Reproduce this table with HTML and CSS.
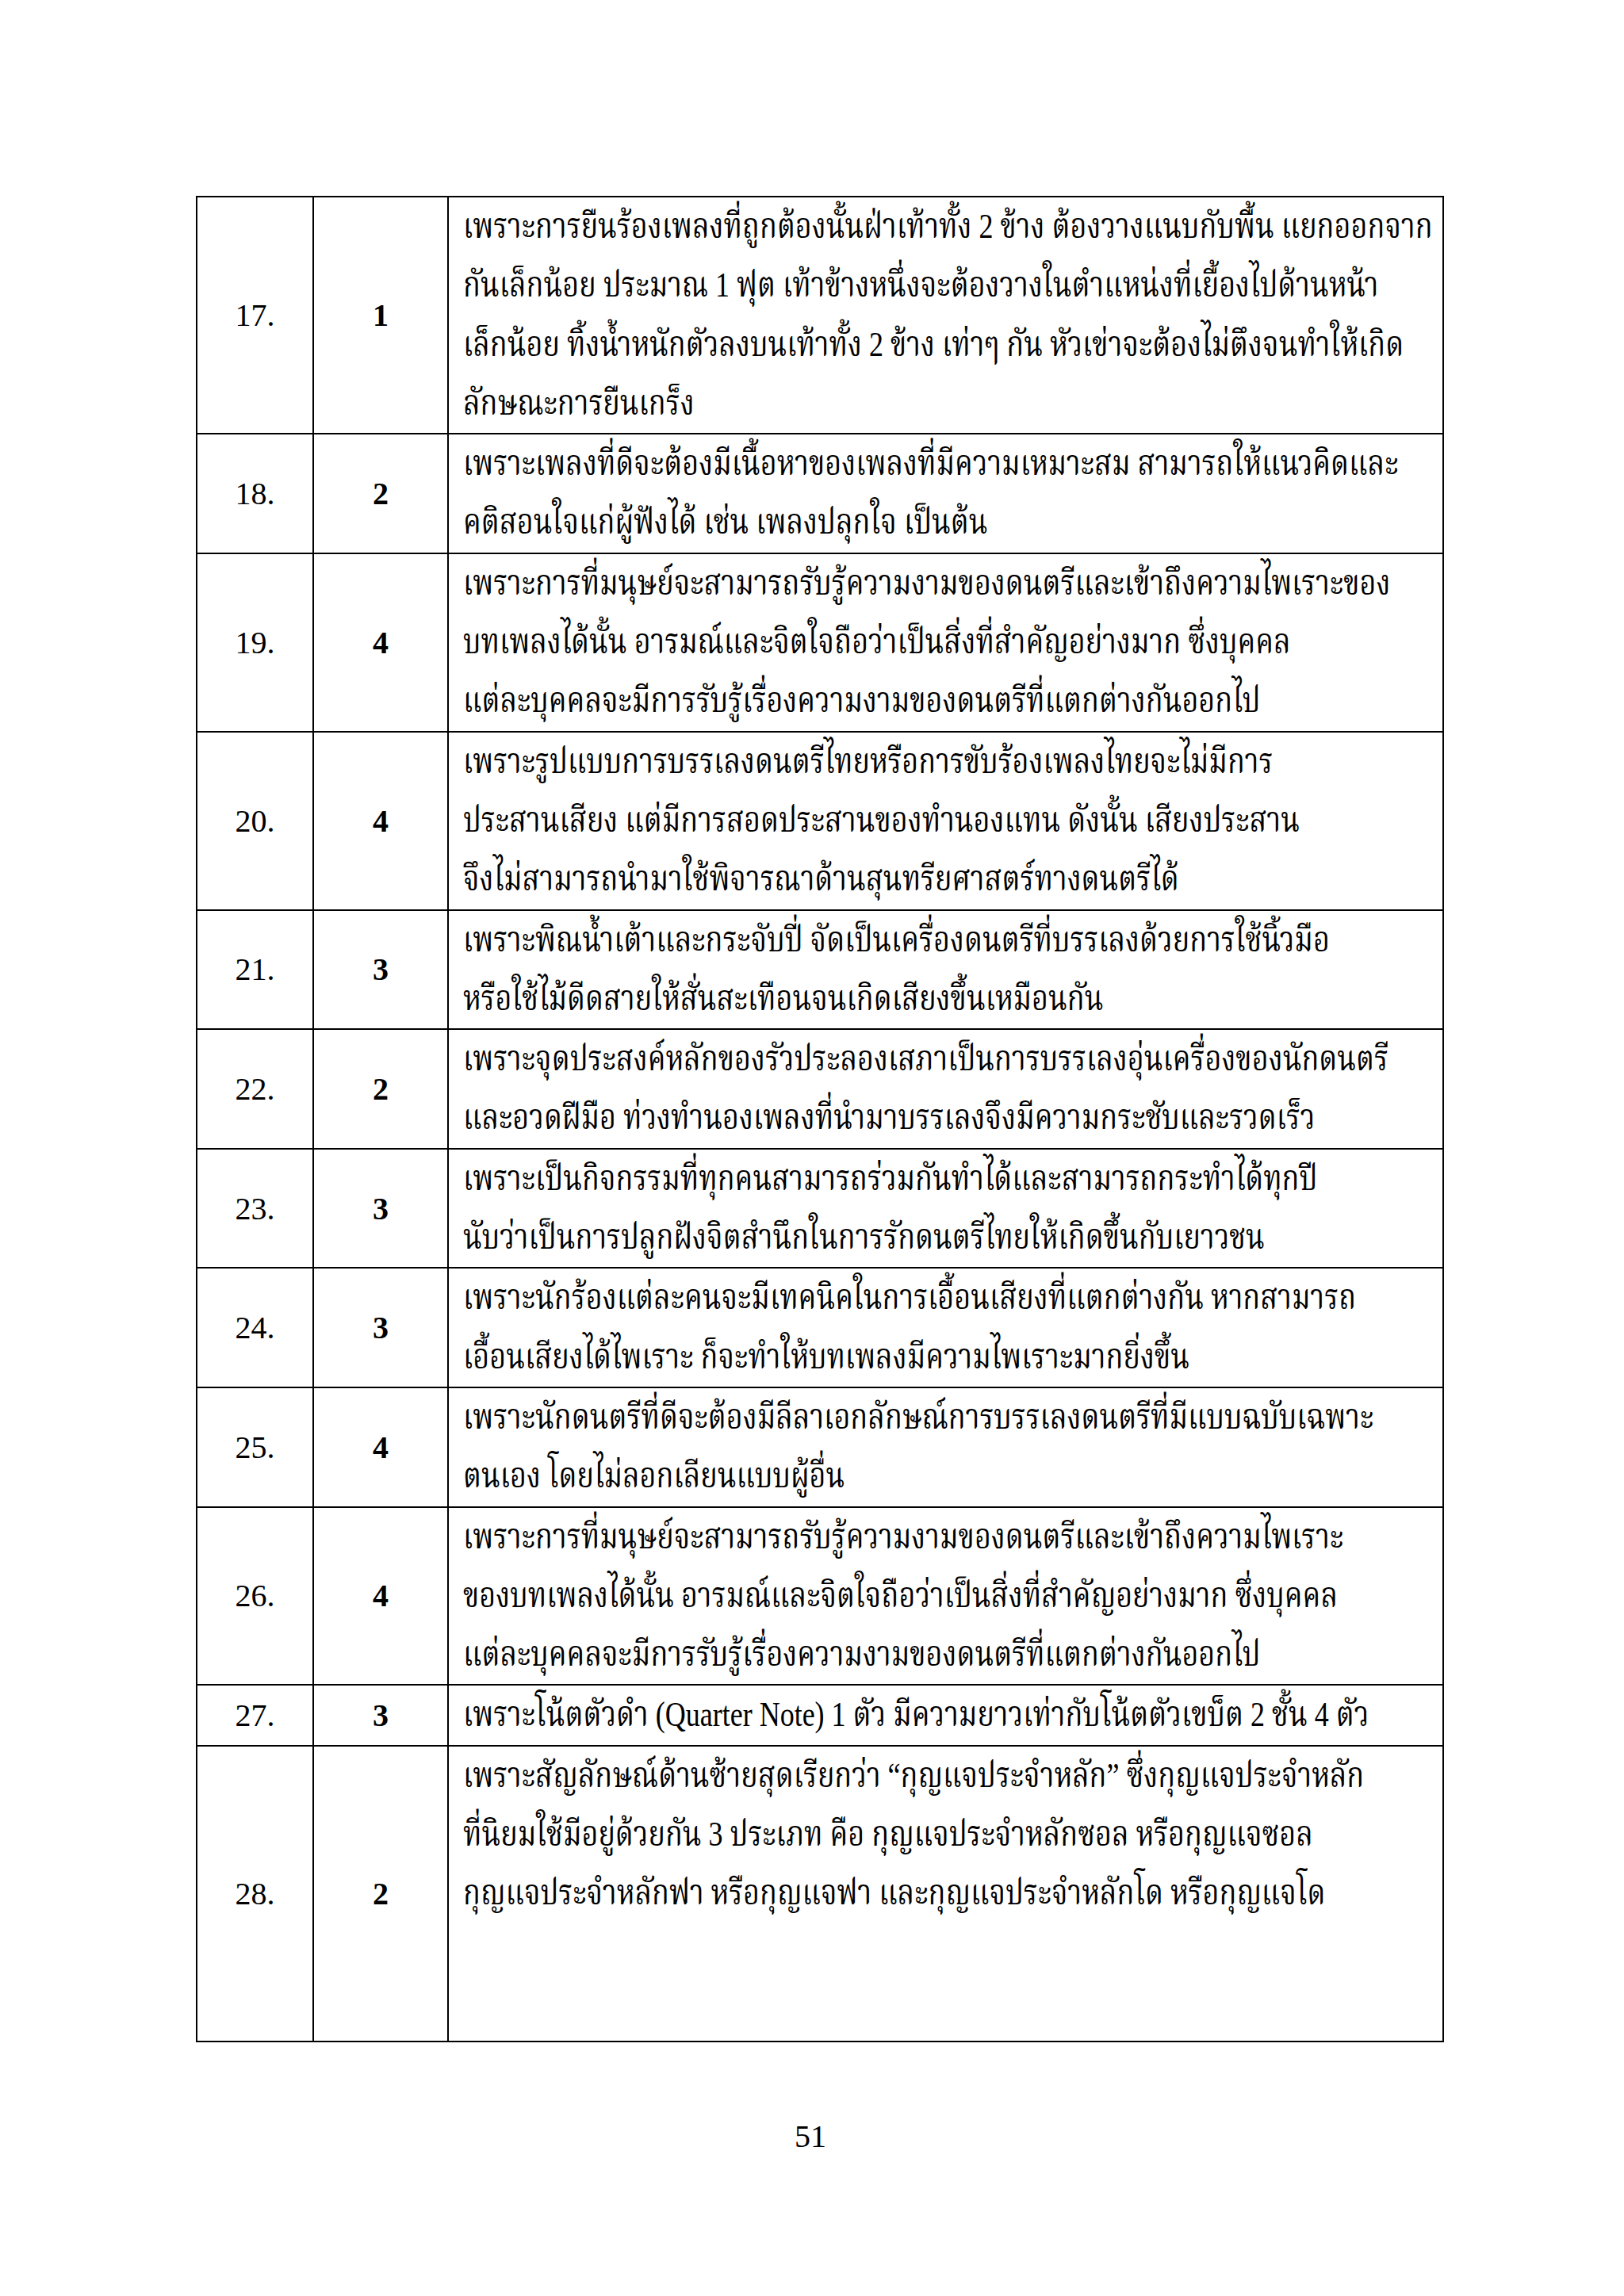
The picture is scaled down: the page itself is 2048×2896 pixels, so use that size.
FILE: index.html
```html
<!DOCTYPE html>
<html lang="th">
<head>
<meta charset="utf-8">
<title>51</title>
<link rel="stylesheet" href="styles.css">
</head>
<body>
<div class="page">
<table class="answers">
<colgroup><col class="c-no"><col class="c-ans"><col class="c-why"></colgroup>
<tbody>
<tr><td class="no">17.</td><td class="ans">1</td><td class="why">
<span class="ln">เพราะการยืนร้องเพลงที่ถูกต้องนั้นฝ่าเท้าทั้ง 2 ข้าง ต้องวางแนบกับพื้น แยกออกจาก</span>
<span class="ln">กันเล็กน้อย ประมาณ 1 ฟุต เท้าข้างหนึ่งจะต้องวางในตำแหน่งที่เยื้องไปด้านหน้า</span>
<span class="ln">เล็กน้อย ทิ้งน้ำหนักตัวลงบนเท้าทั้ง 2 ข้าง เท่าๆ กัน หัวเข่าจะต้องไม่ตึงจนทำให้เกิด</span>
<span class="ln">ลักษณะการยืนเกร็ง</span>
</td></tr>
<tr><td class="no">18.</td><td class="ans">2</td><td class="why">
<span class="ln">เพราะเพลงที่ดีจะต้องมีเนื้อหาของเพลงที่มีความเหมาะสม สามารถให้แนวคิดและ</span>
<span class="ln">คติสอนใจแก่ผู้ฟังได้ เช่น เพลงปลุกใจ เป็นต้น</span>
</td></tr>
<tr><td class="no">19.</td><td class="ans">4</td><td class="why">
<span class="ln">เพราะการที่มนุษย์จะสามารถรับรู้ความงามของดนตรีและเข้าถึงความไพเราะของ</span>
<span class="ln">บทเพลงได้นั้น อารมณ์และจิตใจถือว่าเป็นสิ่งที่สำคัญอย่างมาก ซึ่งบุคคล</span>
<span class="ln">แต่ละบุคคลจะมีการรับรู้เรื่องความงามของดนตรีที่แตกต่างกันออกไป</span>
</td></tr>
<tr><td class="no">20.</td><td class="ans">4</td><td class="why">
<span class="ln">เพราะรูปแบบการบรรเลงดนตรีไทยหรือการขับร้องเพลงไทยจะไม่มีการ</span>
<span class="ln">ประสานเสียง แต่มีการสอดประสานของทำนองแทน ดังนั้น เสียงประสาน</span>
<span class="ln">จึงไม่สามารถนำมาใช้พิจารณาด้านสุนทรียศาสตร์ทางดนตรีได้</span>
</td></tr>
<tr><td class="no">21.</td><td class="ans">3</td><td class="why">
<span class="ln">เพราะพิณน้ำเต้าและกระจับปี่ จัดเป็นเครื่องดนตรีที่บรรเลงด้วยการใช้นิ้วมือ</span>
<span class="ln">หรือใช้ไม้ดีดสายให้สั่นสะเทือนจนเกิดเสียงขึ้นเหมือนกัน</span>
</td></tr>
<tr><td class="no">22.</td><td class="ans">2</td><td class="why">
<span class="ln">เพราะจุดประสงค์หลักของรัวประลองเสภาเป็นการบรรเลงอุ่นเครื่องของนักดนตรี</span>
<span class="ln">และอวดฝีมือ ท่วงทำนองเพลงที่นำมาบรรเลงจึงมีความกระชับและรวดเร็ว</span>
</td></tr>
<tr><td class="no">23.</td><td class="ans">3</td><td class="why">
<span class="ln">เพราะเป็นกิจกรรมที่ทุกคนสามารถร่วมกันทำได้และสามารถกระทำได้ทุกปี</span>
<span class="ln">นับว่าเป็นการปลูกฝังจิตสำนึกในการรักดนตรีไทยให้เกิดขึ้นกับเยาวชน</span>
</td></tr>
<tr><td class="no">24.</td><td class="ans">3</td><td class="why">
<span class="ln">เพราะนักร้องแต่ละคนจะมีเทคนิคในการเอื้อนเสียงที่แตกต่างกัน หากสามารถ</span>
<span class="ln">เอื้อนเสียงได้ไพเราะ ก็จะทำให้บทเพลงมีความไพเราะมากยิ่งขึ้น</span>
</td></tr>
<tr><td class="no">25.</td><td class="ans">4</td><td class="why">
<span class="ln">เพราะนักดนตรีที่ดีจะต้องมีลีลาเอกลักษณ์การบรรเลงดนตรีที่มีแบบฉบับเฉพาะ</span>
<span class="ln">ตนเอง โดยไม่ลอกเลียนแบบผู้อื่น</span>
</td></tr>
<tr><td class="no">26.</td><td class="ans">4</td><td class="why">
<span class="ln">เพราะการที่มนุษย์จะสามารถรับรู้ความงามของดนตรีและเข้าถึงความไพเราะ</span>
<span class="ln">ของบทเพลงได้นั้น อารมณ์และจิตใจถือว่าเป็นสิ่งที่สำคัญอย่างมาก ซึ่งบุคคล</span>
<span class="ln">แต่ละบุคคลจะมีการรับรู้เรื่องความงามของดนตรีที่แตกต่างกันออกไป</span>
</td></tr>
<tr><td class="no">27.</td><td class="ans">3</td><td class="why">
<span class="ln">เพราะโน้ตตัวดำ (Quarter Note) 1 ตัว มีความยาวเท่ากับโน้ตตัวเขบ็ต 2 ชั้น 4 ตัว</span>
</td></tr>
<tr><td class="no">28.</td><td class="ans">2</td><td class="why">
<span class="ln">เพราะสัญลักษณ์ด้านซ้ายสุดเรียกว่า “กุญแจประจำหลัก” ซึ่งกุญแจประจำหลัก</span>
<span class="ln">ที่นิยมใช้มีอยู่ด้วยกัน 3 ประเภท คือ กุญแจประจำหลักซอล หรือกุญแจซอล</span>
<span class="ln">กุญแจประจำหลักฟา หรือกุญแจฟา และกุญแจประจำหลักโด หรือกุญแจโด</span>
<span class="ln blank">&nbsp;</span>
<span class="ln blank">&nbsp;</span>
</td></tr>
</tbody>
</table>
<div class="folio">51</div>
</div>
</body>
</html>
```

FILE: styles.css
```css
html, body {
  margin: 0;
  padding: 0;
  background: #ffffff;
}
.page {
  width: 2048px;
  height: 2896px;
  box-sizing: border-box;
  padding: 247px 0 0 247px;
  font-family: "Liberation Serif", "Kinnari", "Norasi", "Noto Serif Thai", "Noto Sans Thai", "Loma", serif;
  color: #000;
}
.answers {
  border-collapse: collapse;
  width: 1572px;
  table-layout: fixed;
}
.c-no { width: 147px; }
.c-ans { width: 170px; }
.c-why { width: 1255px; }
.answers td {
  border: 2px solid #000;
  padding: 0;
  vertical-align: middle;
}
.no, .ans {
  text-align: center;
  font-size: 40px;
}
.ans { font-weight: bold; }
.why {
  padding: 0 0 0 18px !important;
  vertical-align: top !important;
  font-size: 44px;
  line-height: 74.3px;
}
.ln {
  display: block;
  white-space: nowrap;
  height: 74.3px;
  transform: scaleX(0.818);
  transform-origin: 0 50%;
}
.folio {
  width: 1550px;
  margin-top: 94px;
  text-align: center;
  font-size: 40px;
  line-height: 50px;
}
```
